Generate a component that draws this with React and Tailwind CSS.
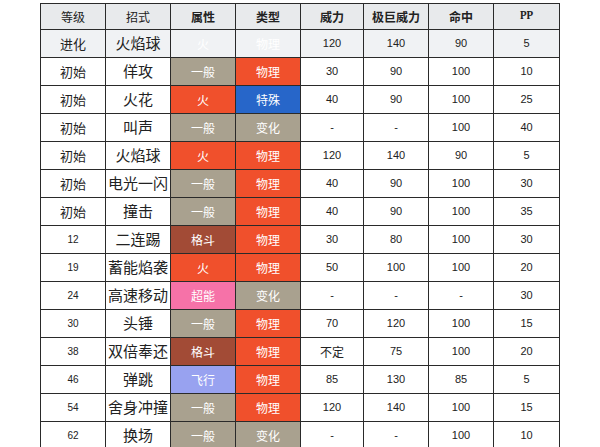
import React from "react";

const TYPE_BG = {
  一般: "bg-[#a9a18f]",
  火: "bg-[#f0502c]",
  格斗: "bg-[#a24b36]",
  超能: "bg-[#f672a8]",
  飞行: "bg-[#98a2f0]",
};

const CAT_BG = {
  物理: "bg-[#f0502c]",
  特殊: "bg-[#2766c9]",
  变化: "bg-[#a9a18f]",
};

const moves = [
  ["初始", "佯攻", "一般", "物理", "30", "90", "100", "10"],
  ["初始", "火花", "火", "特殊", "40", "90", "100", "25"],
  ["初始", "叫声", "一般", "变化", "-", "-", "100", "40"],
  ["初始", "火焰球", "火", "物理", "120", "140", "90", "5"],
  ["初始", "电光一闪", "一般", "物理", "40", "90", "100", "30"],
  ["初始", "撞击", "一般", "物理", "40", "90", "100", "35"],
  ["12", "二连踢", "格斗", "物理", "30", "80", "100", "30"],
  ["19", "蓄能焰袭", "火", "物理", "50", "100", "100", "20"],
  ["24", "高速移动", "超能", "变化", "-", "-", "-", "30"],
  ["30", "头锤", "一般", "物理", "70", "120", "100", "15"],
  ["38", "双倍奉还", "格斗", "物理", "不定", "75", "100", "20"],
  ["46", "弹跳", "飞行", "物理", "85", "130", "85", "5"],
  ["54", "舍身冲撞", "一般", "物理", "120", "140", "100", "15"],
  ["62", "换场", "一般", "变化", "-", "-", "100", "10"],
];

const cell = "border border-[#2a2a2a] text-center p-0";
const num = "text-[11px] font-['Liberation_Sans',sans-serif]";

export default function App() {
  return (
    <div className="w-[600px] h-[447px] overflow-hidden bg-white pt-[3px] pl-[40px] font-['Noto_Sans_CJK_SC',sans-serif] text-[#222]">
      <table className="border-collapse table-fixed w-[519px]">
        <colgroup>
          <col className="w-[65px]" />
          <col className="w-[65px]" />
          <col className="w-[65px]" />
          <col className="w-[65px]" />
          <col className="w-[63px]" />
          <col className="w-[65px]" />
          <col className="w-[65px]" />
          <col className="w-[66px]" />
        </colgroup>
        <thead>
          <tr className="h-[26px] bg-[#e8eaec]">
            <th className={`${cell} text-[12px] font-normal`}>等级</th>
            <th className={`${cell} text-[12px] font-normal`}>招式</th>
            <th className={`${cell} text-[12px] font-bold`}>属性</th>
            <th className={`${cell} text-[12px] font-bold`}>类型</th>
            <th className={`${cell} text-[12px] font-bold`}>威力</th>
            <th className={`${cell} text-[12px] font-bold`}>极巨威力</th>
            <th className={`${cell} text-[12px] font-bold`}>命中</th>
            <th className={`${cell} text-[11px] font-bold font-serif`}>PP</th>
          </tr>
        </thead>
        <tbody>
          {/* evolution row, type cells are washed out */}
          <tr className="h-[28px] bg-[#f0f2f4]">
            <td className={`${cell} text-[13px]`}>进化</td>
            <td className={`${cell} text-[15px]`}>火焰球</td>
            <td className={`${cell} text-[12px] text-white`}>火</td>
            <td className={`${cell} text-[12px] text-white`}>物理</td>
            <td className={`${cell} ${num}`}>120</td>
            <td className={`${cell} ${num}`}>140</td>
            <td className={`${cell} ${num}`}>90</td>
            <td className={`${cell} ${num}`}>5</td>
          </tr>
          {moves.map((m, idx) => (
            <tr key={idx} className="h-[28px] bg-white">
              <td className={`${cell} ${/\d/.test(m[0]) ? "text-[10px] font-['Liberation_Sans',sans-serif]" : "text-[13px]"}`}>
                {m[0]}
              </td>
              <td className={`${cell} text-[15px]`}>{m[1]}</td>
              <td className={`${cell} text-[12px] text-white ${TYPE_BG[m[2]]}`}>{m[2]}</td>
              <td className={`${cell} text-[12px] text-white ${CAT_BG[m[3]]}`}>{m[3]}</td>
              {m.slice(4).map((v, j) => (
                <td key={j} className={`${cell} ${v === "不定" ? "text-[12px]" : num}`}>
                  {v}
                </td>
              ))}
            </tr>
          ))}
        </tbody>
      </table>
    </div>
  );
}
